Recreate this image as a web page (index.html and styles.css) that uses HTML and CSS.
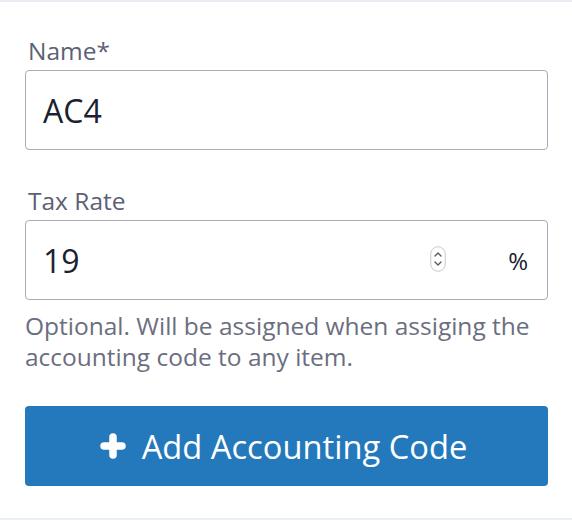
FILE: index.html
```html
<!DOCTYPE html>
<html lang="en">
<head>
<meta charset="utf-8">
<title>Add Accounting Code</title>
<link rel="stylesheet" href="styles.css">
</head>
<body>
<form class="panel">
  <div class="field">
    <label class="label" for="name">Name*</label>
    <div class="control">
      <input class="input" id="name" type="text" value="AC4">
    </div>
  </div>
  <div class="field field-tax">
    <label class="label" for="tax">Tax Rate</label>
    <div class="control">
      <input class="input" id="tax" type="text" value="19">
      <svg class="spinner" width="16" height="26" viewBox="0 0 16 26" aria-hidden="true">
        <rect x="0.75" y="0.75" width="14.5" height="24.5" rx="7.25" fill="#fff" stroke="#c9c9cf" stroke-width="1"/>
        <path d="M5 10 L8 7 L11 10" fill="none" stroke="#555" stroke-width="1.3" stroke-linecap="round" stroke-linejoin="round"/>
        <path d="M5 16 L8 19 L11 16" fill="none" stroke="#555" stroke-width="1.3" stroke-linecap="round" stroke-linejoin="round"/>
      </svg>
      <span class="unit">%</span>
    </div>
    <p class="help">Optional. Will be assigned when assiging the accounting code to any item.</p>
  </div>
  <button class="btn" type="button">
    <svg class="plus" width="26" height="26" viewBox="0 0 26 26" aria-hidden="true">
      <path d="M13 4 V22 M4 13 H22" stroke="#fff" stroke-width="7.5" stroke-linecap="round"/>
    </svg>
    <span>Add Accounting Code</span>
  </button>
</form>
</body>
</html>
```
FILE: styles.css
```css
html, body {
  margin: 0;
  padding: 0;
  background: #fff;
}
body {
  font-family: "Open Sans", "Liberation Sans", sans-serif;
  width: 572px;
  height: 520px;
  box-sizing: border-box;
  border-top: 2px solid #e9edf3;
  border-bottom: 2px solid #eceef2;
  overflow: hidden;
}
.panel {
  display: flex;
  flex-direction: column;
  padding: 31px 24px 0 25px;
}
.field {
  display: flex;
  flex-direction: column;
}
.field-tax {
  margin-top: 33px;
}
.label {
  font-size: 24.5px;
  line-height: 36px;
  color: #5c6174;
  margin-bottom: 1px;
  padding-left: 3px;
}
.control {
  display: flex;
  align-items: center;
  height: 80px;
  box-sizing: border-box;
  border: 1px solid #aaabb9;
  border-radius: 4px;
  padding: 0 19px 0 17px;
}
.input {
  flex: 1;
  min-width: 0;
  border: none;
  outline: none;
  padding: 0;
  margin: 0;
  font-family: "Open Sans", "Liberation Sans", sans-serif;
  font-size: 32px;
  color: #1a2130;
  background: transparent;
}
.spinner {
  margin-right: 62px;
  margin-top: -2px;
  flex: none;
}
.unit {
  font-size: 24px;
  color: #1a2130;
}
.help {
  margin: 10px 0 0;
  font-size: 24.5px;
  line-height: 31px;
  color: #6b6e80;
}
.btn {
  margin-top: 34px;
  height: 80px;
  display: flex;
  align-items: center;
  justify-content: center;
  gap: 16px;
  background: #2379bc;
  border: none;
  border-radius: 4px;
  color: #fff;
  font-family: "Open Sans", "Liberation Sans", sans-serif;
  font-size: 32.7px;
  padding: 0 6px 0 0;
}
.plus {
  flex: none;
}
```
